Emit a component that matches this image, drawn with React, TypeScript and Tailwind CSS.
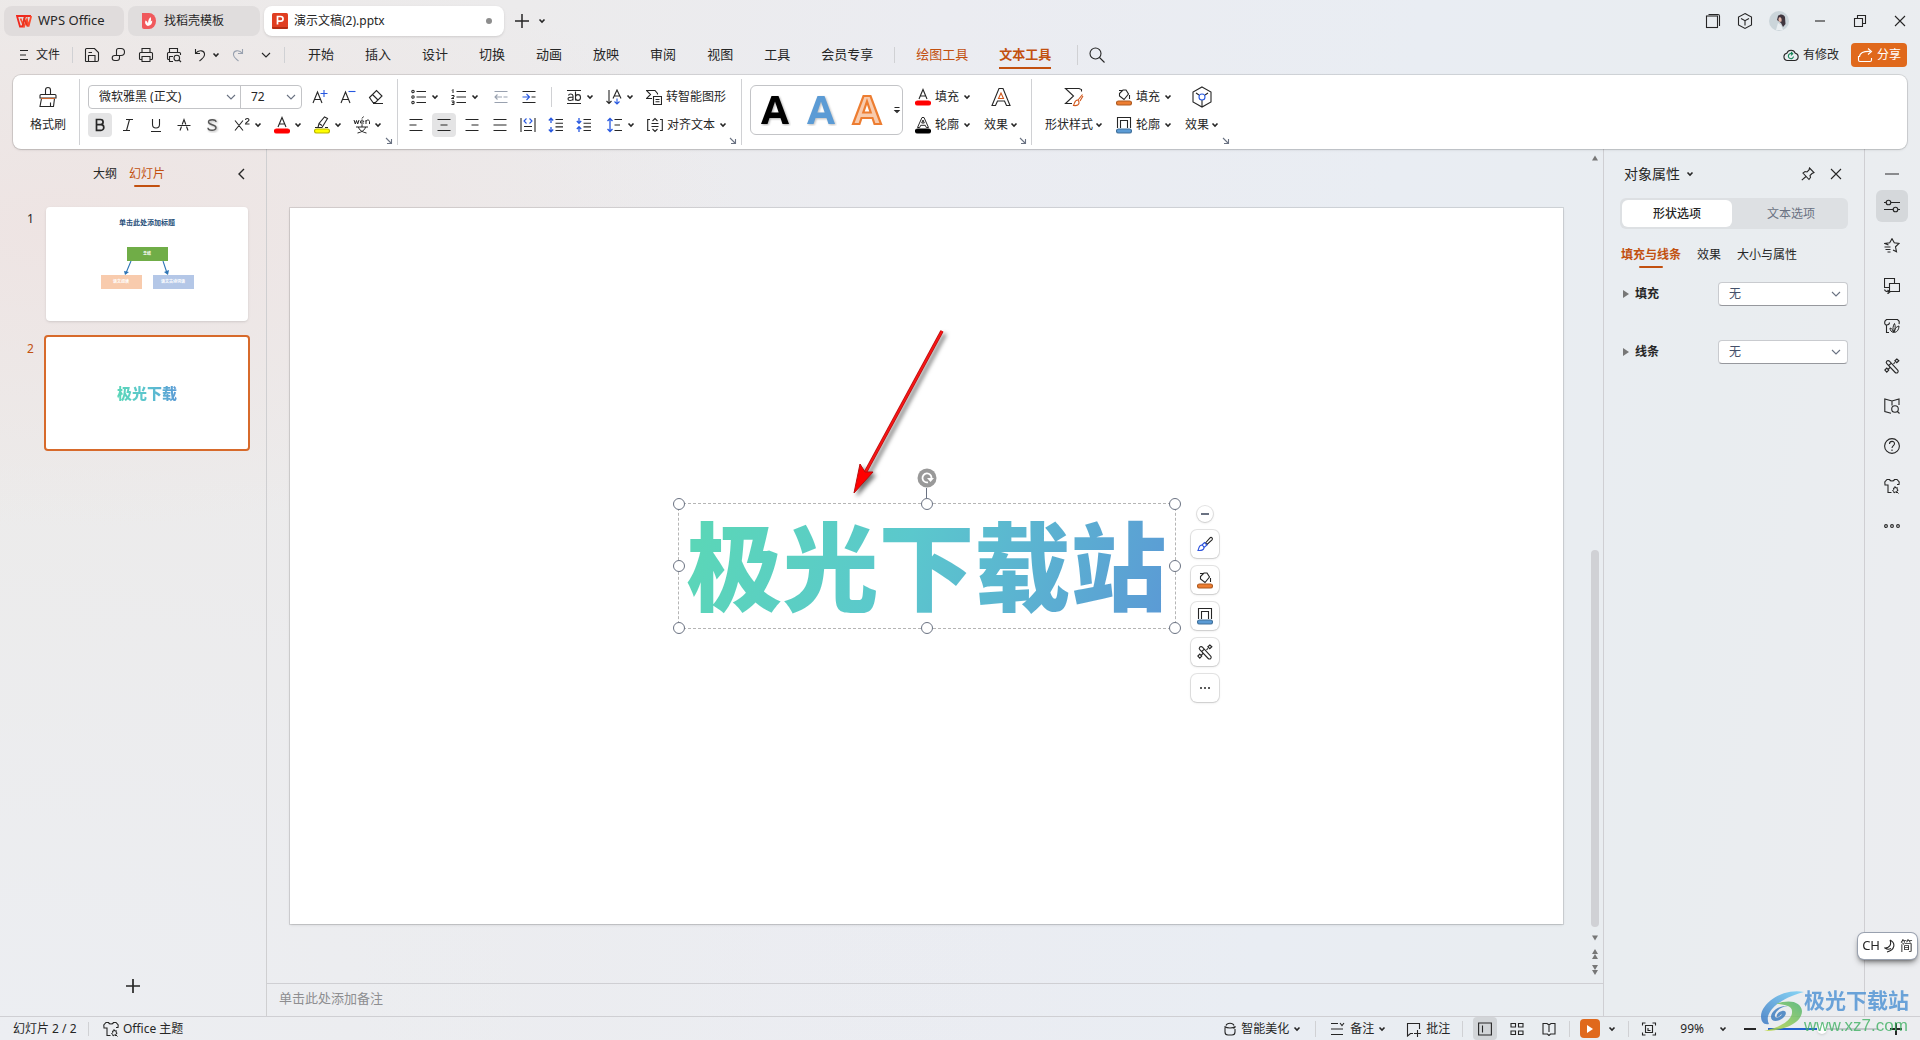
import { FC, ReactNode } from "react";

type IconProps = { w?: number; h?: number; className?: string; children: ReactNode };

const Svg: FC<IconProps> = ({ w = 16, h = 16, className, children }) => (
  <svg
    width={w}
    height={h}
    viewBox={`0 0 ${w} ${h}`}
    fill="none"
    stroke="currentColor"
    strokeWidth="1.1"
    className={`shrink-0 ${className ?? ""}`}
    aria-hidden="true"
  >
    {children}
  </svg>
);

const Caret: FC = () => (
  <Svg w={8} h={8}>
    <path d="M1.500 2.500 4 5l2.500-2.500" strokeWidth="1.600" />
  </Svg>
);

const Chevron: FC<{ className?: string }> = ({ className }) => (
  <Svg w={10} h={10} className={className}>
    <path d="M1 3l4 4 4-4" />
  </Svg>
);

const Launcher: FC = () => (
  <div className="flex justify-end">
    <button aria-label="更多设置" className="text-gray-500">
      <Svg w={8} h={8} className="block">
        <path d="M1 1l5 5M6.500 2v4.500H2" />
      </Svg>
    </button>
  </div>
);

const Divider: FC<{ className?: string }> = ({ className }) => (
  <div className={`w-px shrink-0 bg-[#d0d1d4] ${className ?? ""}`} />
);

const Tool: FC<{ label: string; active?: boolean; dim?: boolean; children: ReactNode }> = ({
  label,
  active,
  dim,
  children,
}) => (
  <div className="flex w-7 justify-center">
    <button
      aria-label={label}
      className={`flex size-6 items-center justify-center rounded ${
        active ? "bg-[#e4e4e5]" : ""
      } ${dim ? "text-gray-400" : ""}`}
    >
      {children}
    </button>
  </div>
);

const Split: FC<{ label: string; children: ReactNode }> = ({ label, children }) => (
  <button aria-label={label} className="flex h-6 items-center">
    <span className="flex w-6 justify-center">{children}</span>
    <Caret />
  </button>
);

const TextTool: FC<{ label: string; icon: ReactNode; caret?: boolean }> = ({
  label,
  icon,
  caret = true,
}) => (
  <button className="flex h-6 items-center">
    <span className="flex w-6 justify-center">{icon}</span>
    <span className="mr-1">{label}</span>
    {caret && <Caret />}
  </button>
);

const BigTool: FC<{ label: string; icon: ReactNode; caret?: boolean }> = ({
  label,
  icon,
  caret = true,
}) => (
  <button className="flex flex-col items-center gap-1">
    <span className="flex h-6 items-center">{icon}</span>
    <span className="flex h-6 items-center gap-0.5">
      {label}
      {caret && <Caret />}
    </span>
  </button>
);

/* ---------- icons ---------- */

const WpsLogo: FC = () => (
  <Svg w={16} h={14}>
    <path d="M1 2h8L6.500 12.500H4L1 2zM15 2H9.500" stroke="#f0291f" strokeWidth="1.800" />
    <path d="M4.500 4.500 8 12.500l3-7 1.500 7L15.200 2" stroke="#fb4a2d" strokeWidth="1.800" />
    <path d="M9 2 6.500 12M8 4l3.500 8.500" stroke="#e6321f" strokeWidth="1.500" />
  </Svg>
);

const DocerLogo: FC = () => (
  <Svg w={15} h={16}>
    <path d="M1 0h7a7 8 0 0 1 0 16H3a2 2 0 0 1-2-2V0z" fill="#f0595c" stroke="none" />
    <path
      d="M7 13C3.500 11.500 4 9 4.500 7.500c1.500.500 2 1.500 2.500 3 0-3 1-5 2.500-6.500 1 2 .500 3.500 0 4.500l1.700-1c.300 3-1.200 5-4.200 5.500z"
      fill="#fff"
      stroke="none"
    />
  </Svg>
);

const PptLogo: FC = () => (
  <Svg w={16} h={16}>
    <rect width="16" height="16" rx="1.500" fill="#e03e21" stroke="none" />
    <path d="M0 14.500a1.500 1.500 0 0 0 1.500 1.500h13a1.500 1.500 0 0 0 1.500-1.500V14H0z" fill="#b52d13" stroke="none" />
    <path d="M5.500 11.500V3.500h3.200a2.300 2.300 0 0 1 0 4.700H5.500" stroke="#fff" strokeWidth="1.700" />
  </Svg>
);

const SaveIcon: FC = () => (
  <Svg>
    <path d="M1.500 14V2.500a1 1 0 0 1 1-1h8l4 4V13a1.500 1.500 0 0 1-1.500 1.500H2a.500.500 0 0 1-.500-.500zM4.500 14.500v-6h6.500v6M4.500 5.500H8" />
  </Svg>
);

const ExportIcon: FC = () => (
  <Svg>
    <path d="M5.500 8V3.500a2 2 0 0 1 2-2H10a3.500 3.500 0 0 1 0 7H3.700a2.500 2.500 0 0 0 0 5H6a2.500 2.500 0 0 0 2.500-2.500V8.500" />
  </Svg>
);

const PrintIcon: FC = () => (
  <Svg>
    <path d="M4 5.500v-4h8v4M3.500 12.500h-1a1 1 0 0 1-1-1v-5a1 1 0 0 1 1-1h11a1 1 0 0 1 1 1v5a1 1 0 0 1-1 1h-1M4 9.500h8v5H4z" />
  </Svg>
);

const PreviewIcon: FC = () => (
  <Svg>
    <path d="M3.500 5.500v-4h8v4M3.500 12.500h-1a1 1 0 0 1-1-1v-5a1 1 0 0 1 1-1h11a1 1 0 0 1 1 1V8M7 9.500H3.500v5H7" />
    <circle cx="10.800" cy="11" r="2.800" />
    <path d="M13 13l2 2" />
  </Svg>
);

const UndoIcon: FC = () => (
  <Svg>
    <path d="M3.500 2v4.500H8M3.500 6.500C7 2 13 3.500 12.500 8c-.300 3-3 4-5 6" />
  </Svg>
);

const RedoIcon: FC = () => (
  <Svg>
    <path d="M12.500 2v4.500H8M12.500 6.500C9 2 3 3.500 3.500 8c.300 3 3 4 5 6" />
  </Svg>
);

const BrushIcon: FC = () => (
  <Svg w={22} h={22}>
    <path d="M8.500 8V4a2.500 2.500 0 0 1 5 0v4M4 8.500h14a1 1 0 0 1 1 1V12H3V9.500a1 1 0 0 1 1-1zM4.500 12.500 3 20.500h13.500l1-8M13.500 16.500v4" />
    <path d="M4 12.500h14" stroke="#d0672f" />
  </Svg>
);

const BulletIcon: FC<{ numbered?: boolean }> = ({ numbered }) => (
  <Svg>
    {numbered ? (
      <path d="M2 .500V4M1 1.500l1-1M.500 6.500H3V8L.500 9.500H3M.500 12H3v3.500H.500M1 13.700h2" strokeWidth="1" />
    ) : (
      <>
        <circle cx="2" cy="2.500" r="1.200" />
        <circle cx="2" cy="8" r="1.200" />
        <circle cx="2" cy="13.500" r="1.200" />
      </>
    )}
    <path d="M5.500 2.500H15M5.500 8H15M5.500 13.500H15" />
  </Svg>
);

const IndentIcon: FC<{ out?: boolean }> = ({ out }) => (
  <Svg>
    <path d="M1.500 2.500h13M1.500 13.500h13M10.500 8h4" />
    <path
      d={out ? "M9 8H2M4.500 5.500 2 8l2.500 2.500" : "M1.500 8h6M5.500 5 8.500 8l-3 3"}
      stroke={out ? "currentColor" : "#2758e0"}
    />
  </Svg>
);

const AlignIcon: FC<{ d: string }> = ({ d }) => (
  <Svg>
    <path d={d} />
  </Svg>
);

const SpacingIcon: FC<{ d: string }> = ({ d }) => (
  <Svg>
    <path d={d} stroke="#2758e0" strokeWidth="1.300" />
    <path d="M7.500 2.500H15M7.500 6.200H15M7.500 9.900H15M7.500 13.500H15" />
  </Svg>
);

const LetterA: FC = () => <path d="M4 11 8 1.500 12 11M5.500 8h5" />;

const FontColorIcon: FC<{ bar: string; hollow?: boolean }> = ({ bar, hollow }) => (
  <Svg w={16} h={18}>
    {hollow ? (
      <path d="M2.500 11.500 7 1.500h2l4.500 10h-2.200l-1-2.200H5.700l-1 2.200zM6.700 7h2.600L8 4z" strokeWidth="1" />
    ) : (
      <LetterA />
    )}
    <rect x=".500" y="13" width="15" height="4" rx="2" fill={bar} stroke={bar} />
  </Svg>
);

const HighlightIcon: FC = () => (
  <Svg w={16} h={18}>
    <path d="M1 11.500h7l5.500-9-3-1.500L5 7.500l-1 4M5 7.500l3 2M11 11.500h3" />
    <rect x=".500" y="13" width="15" height="4" rx="2" fill="#ff0" stroke="#b9b400" />
  </Svg>
);

const BucketIcon: FC = () => (
  <Svg w={16} h={18}>
    <path d="M3.500 5.500 7 2h3l2.500 4-4.500 5.500-4.500-3.500zM3 2.500h4M13.500 7v4" />
    <rect x=".500" y="13" width="15" height="4" rx="2" fill="#ed7d31" stroke="#ae5a21" />
  </Svg>
);

const OutlineIcon: FC = () => (
  <Svg w={16} h={18}>
    <path d="M1.500 12V1.500h13V12M4.500 12V4.500h7V12" />
    <rect x=".500" y="13" width="15" height="4" rx="2" fill="#5b9bd5" stroke="#41719c" />
  </Svg>
);

const SparkIcon: FC = () => (
  <Svg>
    <path
      d="M2.800 3.200a1.800 1.800 0 0 1 2.600 0l8.300 8.900a1.700 1.700 0 0 1-2.500 2.400L2.800 5.700a1.800 1.800 0 0 1 0-2.500zM4.800 7.500l2.500-2.300M9.500 5.800 11 4.300M4.300 11.200l1.700-1.700"
      strokeWidth="1.100"
    />
    <path d="M12.800 1l2 1.800-2 1.900-1.900-1.900zM2.800 10.200l1.900 1.900-1.900 2-1.900-2z" strokeWidth="1.200" />
  </Svg>
);

const ShirtIcon: FC = () => (
  <Svg>
    <path d="M7.500 14.500H4V7H1L.800 4 3 1.500h2.500c.500 2 4.500 2 5 0H13L15.200 4 15 6.500h-2" />
    <path
      d="M11 8.500l.700 1.500 1.700-.300-.500 1.500 1.300 1-1.500.800.300 1.700-1.700-.700L10 15l-.200-1.700-1.300-.700 1.300-1L9.500 10l1 .200zM13 14l1.500 1.500"
      strokeWidth="1"
    />
  </Svg>
);

/* ---------- title bar & menu ---------- */

const TitleBar: FC = () => (
  <header className="flex h-[41px] shrink-0 items-center pl-1 text-[13px]">
    <button className="mr-1 flex h-[30px] w-[120px] items-center gap-1.5 rounded-lg bg-[#e0dcdc] pl-3">
      <WpsLogo />
      WPS Office
    </button>
    <button className="mr-1 flex h-[30px] w-[132px] items-center gap-2 rounded-lg bg-[#e0dddd] pl-[13px] text-xs">
      <DocerLogo />
      找稻壳模板
    </button>
    <button className="flex h-[30px] w-[240px] items-center gap-1.5 rounded-lg bg-white pl-2 text-xs shadow">
      <PptLogo />
      演示文稿(2).pptx
      <span className="mr-3 ml-auto size-1.5 rounded-full bg-[#8d8d8d]" />
    </button>
    <button aria-label="新建" className="ml-2.5">
      <Svg>
        <path d="M8 1v14M1 8h14" strokeWidth="1.500" />
      </Svg>
    </button>
    <button aria-label="标签列表" className="ml-2">
      <Caret />
    </button>

    <div className="ml-auto flex items-center">
      <button aria-label="窗口" className="flex w-8 justify-center">
        <Svg>
          <rect x="1.500" y="3" width="11" height="11.500" />
          <path d="M3.500 1.500H13a1.500 1.500 0 0 1 1.500 1.500v10" />
        </Svg>
      </button>
      <button aria-label="应用" className="mr-2 flex w-8 justify-center">
        <Svg w={16} h={18}>
          <path d="M8 1.500 14.500 5v8L8 16.500 1.500 13V5L8 1.500zM4 6.500l4 2.200 4-2.200M8 8.700v4.800" />
        </Svg>
      </button>
      <button aria-label="账号">
        <Svg w={20} h={20} className="rounded-full">
          <rect width="20" height="20" fill="#cbd5da" stroke="none" />
          <path d="M9 5c2-2.500 6-2 7 1l.500 7-2.500 3-2-4-4-3z" fill="#40363f" stroke="none" />
          <path d="M10 6.500c2-1 3 1 2.500 4l-2 .500c-1-1-1.500-3-.500-4.500z" fill="#e5b9ab" stroke="none" />
          <path d="M7 19l2-7 3 2 2 5z" fill="#e9eef1" stroke="none" />
        </Svg>
      </button>
      <button aria-label="最小化" className="ml-[11px] flex w-10 justify-center">
        <Svg w={12} h={12}>
          <path d="M1 6h10" />
        </Svg>
      </button>
      <button aria-label="还原" className="flex w-10 justify-center">
        <Svg w={14} h={14}>
          <path d="M1.500 4.500h8v8h-8zM4.500 4V1.500h8v8H10" />
        </Svg>
      </button>
      <button aria-label="关闭" className="flex w-10 justify-center">
        <Svg w={12} h={12}>
          <path d="M1 1l10 10M11 1 1 11" />
        </Svg>
      </button>
    </div>
  </header>
);

const menus: string[] = ["开始", "插入", "设计", "切换", "动画", "放映", "审阅", "视图", "工具", "会员专享"];

const MenuBar: FC = () => (
  <nav className="mb-1.5 flex h-7 shrink-0 items-center text-[13px]">
    <button className="ml-[18px] flex items-center gap-1.5 text-xs">
      <Svg w={12} h={12}>
        <path d="M2 1.500h8M2 6h6M2 10.500h8" />
      </Svg>
      文件
    </button>
    <Divider className="mr-[5px] ml-3 h-4" />
    <div className="flex">
      <Tool label="保存">
        <SaveIcon />
      </Tool>
      <div className="-mx-px flex">
        <Tool label="输出">
          <ExportIcon />
        </Tool>
      </div>
      <Tool label="打印">
        <PrintIcon />
      </Tool>
      <Tool label="打印预览">
        <PreviewIcon />
      </Tool>
      <Split label="撤销">
        <UndoIcon />
      </Split>
    </div>
    <div className="ml-1 flex">
      <Tool label="恢复" dim>
        <RedoIcon />
      </Tool>
      <Tool label="自定义">
        <Chevron />
      </Tool>
    </div>
    <Divider className="mr-[23px] ml-1 h-4" />
    <div className="flex gap-[31px]">
      {menus.map((menu) => (
        <button key={menu}>{menu}</button>
      ))}
    </div>
    <Divider className="mx-[21px] h-4" />
    <button className="text-[#c2500f]">绘图工具</button>
    <button className="ml-[31px] flex h-7 items-center border-b-2 border-[#c2500f] pt-0.5 font-bold text-[#c2500f]">
      文本工具
    </button>
    <Divider className="mr-2.5 ml-[26px] h-5" />
    <button aria-label="搜索">
      <Svg w={18} h={18}>
        <circle cx="7.500" cy="7.500" r="5.500" />
        <path d="M11.500 11.500l5 5" />
      </Svg>
    </button>

    <button className="mr-3 ml-auto flex items-center gap-1 text-xs">
      <Svg w={16} h={14}>
        <path d="M4.500 12.500a3.700 3.700 0 0 1-.700-7.300 4.500 4.500 0 0 1 8.500 0 3.700 3.700 0 0 1-.700 7.300z" />
        <path d="M10.500 8.500a2.600 2.600 0 1 1-1.500-2.800M8 4l1.700 1.700L8 7.300" stroke="#168659" />
      </Svg>
      有修改
    </button>
    <button className="mr-[13px] flex h-6 w-14 items-center justify-center gap-1 rounded bg-[#e0691c] text-xs text-white">
      <Svg>
        <path d="M1.500 9v4a1.500 1.500 0 0 0 1.500 1.500h10a1.500 1.500 0 0 0 1.500-1.500v-2M2.500 10c0-4 4-6 11-5.500M11 1.500l3.500 3-3.500 3" />
      </Svg>
      分享
    </button>
  </nav>
);

/* ---------- ribbon ---------- */

const Ribbon: FC = () => (
  <section className="z-10 mx-[13px] flex h-[74px] shrink-0 rounded-lg bg-white text-xs shadow ring-1 ring-black/10">
    <div className="w-[66px] pt-2.5 pl-1 text-center">
      <div className="flex justify-center">
        <BigTool label="格式刷" caret={false} icon={<BrushIcon />} />
      </div>
    </div>
    <Divider className="my-1" />

    <div className="w-[317px] pt-2.5 pr-1 pl-2">
      <div className="flex h-6 items-center">
        <div className="mr-1 flex h-6 rounded border border-[#c3c4c7]">
          <div className="relative flex w-[152px] items-center border-r border-[#c3c4c7]">
            <select aria-label="字体" className="w-full appearance-none pl-2.5 text-xs outline-none">
              <option>微软雅黑 (正文)</option>
            </select>
            <Chevron className="pointer-events-none absolute right-1 text-gray-500" />
          </div>
          <div className="relative flex w-[60px] items-center">
            <select aria-label="字号" className="w-full appearance-none pl-2.5 text-xs outline-none">
              <option>72</option>
            </select>
            <Chevron className="pointer-events-none absolute right-[5px] text-gray-500" />
          </div>
        </div>
        <Tool label="增大字号">
          <Svg>
            <path d="M1 14 5.500 3 10 14M2.500 10.500h6" />
            <path d="M12 1v7M8.500 4.500h7" stroke="#2758e0" />
          </Svg>
        </Tool>
        <Tool label="减小字号">
          <Svg>
            <path d="M1 14 5.500 3 10 14M2.500 10.500h6" />
            <path d="M8.500 2.500h7" stroke="#2758e0" />
          </Svg>
        </Tool>
        <Tool label="清除格式">
          <Svg>
            <path d="M1.500 8.500 8.500 1.500l5.500 5.500-6.500 6.500H5zM4.500 5.500l5.500 5.500M5 14.500h10" />
          </Svg>
        </Tool>
      </div>
      <div className="mt-1 flex h-6 items-center">
        <div className="-ml-0.5 flex">
          <Tool label="加粗" active>
            <Svg>
              <path d="M4.500 2.500h4a2.600 2.600 0 0 1 0 5.200h-4zM4.500 7.700H9a2.800 2.800 0 0 1 0 5.600H4.500z" strokeWidth="1.700" />
            </Svg>
          </Tool>
          <Tool label="倾斜">
            <Svg>
              <path d="M6 2.500h7M3 13.500h7M9.500 2.500l-3 11" />
            </Svg>
          </Tool>
          <Tool label="下划线">
            <Svg>
              <path d="M4.500 2v5.500a3.500 3.500 0 0 0 7 0V2M3 14.500h10" />
            </Svg>
          </Tool>
          <Tool label="删除线">
            <Svg>
              <path d="M4 13.500l1.500-4M12 13.500l-1.500-4M6.200 7.500 8 2.500l1.800 5M1.500 8.500h13" />
            </Svg>
          </Tool>
          <Tool label="阴影">
            <Svg>
              <path
                d="M12 5c0-3-7.500-3-7.500 0 0 3.500 7.500 2 7.500 5.700 0 3.500-8 3.300-8 0"
                stroke="#555"
                strokeWidth="1.400"
                className="drop-shadow-[1px_1px_1px_#aaa]"
              />
            </Svg>
          </Tool>
        </div>
        <div className="ml-1 flex gap-2">
          <Split label="上标">
            <Svg>
              <path d="M1 3.500l8 10M9 3.500l-8 10M11.500 3c0-2 3.500-2 3.500 0 0 1.500-3.500 2-3.500 4H15.500" />
            </Svg>
          </Split>
          <Split label="字体颜色">
            <FontColorIcon bar="#f00" />
          </Split>
          <Split label="突出显示">
            <HighlightIcon />
          </Split>
          <Split label="拼音指南">
            <Svg w={18} h={18}>
              <path
                d="M1 4l1.300 4L3.500 4.500 4.700 8 6 4M7.500 6h3.200c0-2.500-3.200-2.500-3.200 0 0 2 1.800 2.500 3 1.500M9 2.500 10.500.500M13 8V4M13 5.500c.500-2 3.500-2 3.500 0V8M3 11h12M9 9v2M5.500 11c.500 3 3.500 5 8 6M12.500 11c-.500 3-3.500 5-8 6"
                strokeWidth="1"
              />
            </Svg>
          </Split>
        </div>
      </div>
      <Launcher />
    </div>
    <Divider className="my-1" />

    <div className="w-[343px] pt-2.5 pr-1 pl-1">
      <div className="flex h-6 items-center pl-[5px]">
        <div className="mr-2 flex gap-2">
          <Split label="项目符号">
            <BulletIcon />
          </Split>
          <Split label="编号">
            <BulletIcon numbered />
          </Split>
        </div>
        <Tool label="减少缩进" dim>
          <IndentIcon out />
        </Tool>
        <Tool label="增加缩进">
          <IndentIcon />
        </Tool>
        <Divider className="mr-2.5 ml-2 h-5" />
        <div className="flex gap-2">
          <Split label="文字效果">
            <Svg>
              <path d="M1 1.500h14M1 14.500h14M7 11.500V7c0-2.500-4-2.500-4.500-.500M7 8C3 8 2 8.700 2 10c0 2 4 2 5 0M9.500 2.500v9M9.500 8c0-3 5-3.500 5 .500s-5 3.500-5 .500" />
            </Svg>
          </Split>
          <Split label="文字方向">
            <Svg>
              <path d="M3 1v13.500M.500 12 3 14.500 5.500 12M7 9.500 11 1l4 8.500M8.500 7h5" />
              <path d="M11 9.500v5M8.500 12.500l2.500 2.500 2.500-2.500" stroke="#2758e0" />
            </Svg>
          </Split>
          <TextTool
            label="转智能图形"
            caret={false}
            icon={
              <Svg>
                <path d="M11.500 5.500V4.500L9 1.500H.500l4 4-4 4H6M7.500 7.500h8v8h-8zM9.500 10.500h4M9.500 12.800h4" />
              </Svg>
            }
          />
        </div>
      </div>
      <div className="mt-1 flex h-6 items-center">
        <Tool label="左对齐">
          <AlignIcon d="M1.500 2.500h13M1.500 8h7M1.500 13.500h13" />
        </Tool>
        <Tool label="居中" active>
          <AlignIcon d="M1.500 2.500h13M4.500 8h7M1.500 13.500h13" />
        </Tool>
        <Tool label="右对齐">
          <AlignIcon d="M1.500 2.500h13M7.500 8h7M1.500 13.500h13" />
        </Tool>
        <Tool label="两端对齐">
          <AlignIcon d="M1.500 2.500h13M1.500 8h13M1.500 13.500h13" />
        </Tool>
        <Tool label="分散对齐">
          <Svg>
            <path d="M1 1v14M15 1v14M4 9.500h8M4 13.500h8" />
            <path d="M6.500 1.500 4 4l2.500 2.500M9.500 1.500 12 4 9.500 6.500" stroke="#2758e0" />
          </Svg>
        </Tool>
        <Tool label="增大段落间距">
          <SpacingIcon d="M3 1v5M.800 3.500 3 1.200l2.200 2.300M3 10v5M.800 12.500 3 14.800l2.200-2.300" />
        </Tool>
        <Tool label="减小段落间距">
          <SpacingIcon d="M3 1v5M.800 4 3 6.300 5.200 4M3 10v5M.800 12 3 9.700 5.200 12" />
        </Tool>
        <div className="ml-[5px] flex gap-2">
          <Split label="行距">
            <Svg>
              <path d="M3 1.500v13M.500 4 3 1.500 5.500 4M.500 12 3 14.500 5.500 12" stroke="#2758e0" strokeWidth="1.300" />
              <path d="M7.500 2.500H15M7.500 8H13M7.500 13.500H15" />
            </Svg>
          </Split>
          <TextTool
            label="对齐文本"
            icon={
              <Svg>
                <path d="M3 2.500H.700v11H3M13 2.500h2.300v11H13M4.500 6.500h7M4.500 9.500h7M5.500 4 8 1.500 10.500 4M5.500 12 8 14.500l2.500-2.500" />
              </Svg>
            }
          />
        </div>
      </div>
      <Launcher />
    </div>
    <Divider className="my-1" />

    <div className="w-[289px] pt-2.5 pr-1 pl-2">
      <div className="flex h-[52px]">
        <div className="mr-2 flex h-[50px] w-[153px] items-center rounded-md border border-[#c3c4c7]">
          <button aria-label="黑色艺术字" className="flex w-[46px] justify-center pl-0.5">
            <Svg w={32} h={32}>
              <path
                d="M2 30 12.500 2h7L30 30h-6.500l-2-6h-11l-2 6zM12.300 18.500h7.400L16 7.500z"
                fill="#000"
                stroke="none"
                className="drop-shadow-[1px_1px_1px_#aaa]"
              />
            </Svg>
          </button>
          <button aria-label="蓝色艺术字" className="flex w-[46px] justify-center pl-0.5">
            <Svg w={32} h={32}>
              <path
                d="M2 30 12.500 2h7L30 30h-6.500l-2-6h-11l-2 6zM12.300 18.500h7.400L16 7.500z"
                fill="#5b9bd5"
                stroke="none"
                className="drop-shadow-[1px_1px_1px_#bbb]"
              />
            </Svg>
          </button>
          <button aria-label="橙色艺术字" className="mr-1 flex w-[46px] justify-center pl-0.5">
            <Svg w={32} h={32}>
              <path
                d="M2 30 12.500 2h7L30 30h-6.500l-2-6h-11l-2 6zM12.300 18.500h7.400L16 7.500z"
                fill="#f8cbad"
                stroke="#ed7d31"
                strokeWidth="2.200"
              />
            </Svg>
          </button>
          <button aria-label="更多样式">
            <Svg w={8} h={8}>
              <path d="M1.500 1.500h5M2 4.500l2 2 2-2z" />
            </Svg>
          </button>
        </div>
        <div className="mr-[13px] flex flex-col gap-1">
          <TextTool label="填充" icon={<FontColorIcon bar="#f00" />} />
          <TextTool label="轮廓" icon={<FontColorIcon bar="#000" hollow />} />
        </div>
        <BigTool
          label="效果"
          icon={
            <Svg w={20} h={20}>
              <path d="M1 18.500 8 1.500h4l7 17h-3.500l-2-4.500h-7l-2 4.500z" />
              <path d="M7.500 11.500h5L10 6z" stroke="#d0561a" />
            </Svg>
          }
        />
      </div>
      <Launcher />
    </div>
    <Divider className="my-1" />

    <div className="w-[202px] pt-2.5 pr-1 pl-[13px]">
      <div className="flex h-[52px]">
        <BigTool
          label="形状样式"
          icon={
            <Svg w={20} h={20}>
              <path d="M17.500 4.500v-2L15 1.500H1.500l8 7.500-8 7.500H8" />
              <path d="M18.500 7.500 14 13M16 14l3-5M14 13c-3-.500-3 2-4.500 5.500 3.500.500 6-.500 5.500-3.500z" stroke="#d0561a" />
            </Svg>
          }
        />
        <div className="mr-[13px] ml-[9px] flex flex-col gap-1">
          <TextTool label="填充" icon={<BucketIcon />} />
          <TextTool label="轮廓" icon={<OutlineIcon />} />
        </div>
        <BigTool
          label="效果"
          icon={
            <Svg w={20} h={22}>
              <path d="M10 1 19 6v10l-9 5-9-5V6zM4 7l3 2M16 7l-3 2M10 14v7" />
              <circle cx="10" cy="11" r="3" stroke="#2758e0" />
            </Svg>
          }
        />
      </div>
      <Launcher />
    </div>
  </section>
);

/* ---------- slide list ---------- */

const Sidebar: FC = () => (
  <aside className="flex w-[267px] shrink-0 flex-col border-r border-[#cfcfd1] text-xs">
    <div className="flex h-[50px] items-center gap-3 pl-[93px]">
      <button className="py-1">大纲</button>
      <button className="flex flex-col items-center pt-[5px] text-[#c2500f]">
        幻灯片
        <span className="mt-[3px] h-0.5 w-[26px] rounded bg-[#c2500f]" />
      </button>
      <button aria-label="收起" className="mr-5 ml-auto">
        <Svg w={10} h={12}>
          <path d="M8 1 3 6l5 5" strokeWidth="1.400" />
        </Svg>
      </button>
    </div>
    <ol className="flex flex-1 flex-col gap-3.5 pt-2 pr-4">
      <li className="flex">
        <span className="w-[46px] pt-1 pl-[27px]">1</span>
        <button className="mr-0.5 flex aspect-video flex-1 flex-col items-center rounded-sm bg-white pt-2.5 text-center shadow">
          <span className="text-[7px] leading-3 font-bold text-[#1f4e79]">单击此处添加标题</span>
          <span className="mt-[18px] w-[41px] bg-[#70ad47] text-[4px] leading-[14px] font-bold text-white">总结</span>
          <Svg w={46} h={14}>
            <path d="M7 0 2 12M39 0l4 12" stroke="#2e75b6" />
            <path d="M0 10l5 1-4 3zM45 9l-5 2 4 3z" fill="#2e75b6" stroke="none" />
          </Svg>
          <span className="flex gap-[11px] text-[4px] leading-[14px] font-bold text-white">
            <span className="w-[41px] bg-[#f8cbad]">语文阅读</span>
            <span className="w-[41px] bg-[#b4c7e7]">语文古诗词语</span>
          </span>
        </button>
      </li>
      <li className="flex">
        <span className="w-11 pt-1.5 pl-[27px] text-[#c2500f]">2</span>
        <button className="flex aspect-video flex-1 items-center justify-center rounded border-2 border-[#d76a2b] bg-white">
          <span className="bg-linear-to-r from-[#5bd6b8] via-[#5bc4cf] to-[#5b9bd5] bg-clip-text text-[15px] font-black text-transparent">
            极光下载
          </span>
        </button>
      </li>
    </ol>
    <button aria-label="新建幻灯片" className="mx-auto mb-[22px]">
      <Svg>
        <path d="M8 1v14M1 8h14" strokeWidth="1.700" />
      </Svg>
    </button>
  </aside>
);

/* ---------- canvas ---------- */

const handles: string[] = [
  "-left-1.5 -top-1.5",
  "left-1/2 -ml-1.5 -top-1.5",
  "-right-1.5 -top-1.5",
  "-left-1.5 top-1/2 -mt-1.5",
  "-right-1.5 top-1/2 -mt-1.5",
  "-left-1.5 -bottom-1.5",
  "left-1/2 -ml-1.5 -bottom-1.5",
  "-right-1.5 -bottom-1.5",
];

const floatTools: Array<{ label: string; icon: ReactNode }> = [
  {
    label: "画笔",
    icon: (
      <Svg>
        <path d="M8.500 7 13 1.800a1.400 1.400 0 0 1 2 2L10 8.500z" />
        <path d="M1 14.500c1-2 .500-5 3.500-5.500 1.500.500 2.500 1.500 2.500 3-.500 2-3.500 2.700-6 2.500zM5 9l2.500-2.500 2.500 2.500L7 11.500" stroke="#2f55dd" />
      </Svg>
    ),
  },
  { label: "填充", icon: <BucketIcon /> },
  { label: "轮廓", icon: <OutlineIcon /> },
  { label: "美化", icon: <SparkIcon /> },
  {
    label: "更多",
    icon: (
      <Svg>
        <path d="M3 8h2M7 8h2M11 8h2" strokeWidth="1.600" />
      </Svg>
    ),
  },
];

const Slide: FC = () => (
  <div className="relative mr-7 ml-[23px] flex aspect-video flex-1 items-center justify-center bg-white shadow ring-1 ring-black/10">
    <div className="relative border border-dashed border-[#b5b5b5] px-2 pb-2">
      <h1 className="bg-[linear-gradient(110deg,#5bd6b8_5%,#5bc8cd_45%,#5b9bd5_98%)] bg-clip-text font-['Noto_Sans_CJK_SC',sans-serif] text-[96px] leading-[116px] font-black whitespace-nowrap text-transparent">
        极光下载站
      </h1>
      {handles.map((pos) => (
        <span key={pos} className={`absolute size-3 rounded-full border border-gray-500 bg-white ${pos}`} />
      ))}
      <div className="absolute -top-9 left-1/2 -ml-2.5 flex flex-col items-center">
        <Svg w={20} h={20}>
          <circle cx="10" cy="10" r="9.500" fill="#999" stroke="none" />
          <path d="M11 14.300a4.500 4.500 0 1 1 3.500-4.300" stroke="#fff" strokeWidth="1.800" />
          <path d="M10 10h7l-3.500 4z" fill="#fff" stroke="none" />
        </Svg>
        <span className="h-2.5 w-px bg-gray-500" />
      </div>
      <div className="absolute top-0.5 left-full ml-4 flex flex-col items-center gap-2">
        <button aria-label="收起工具" className="flex size-4 items-center justify-center rounded-full bg-white shadow ring-1 ring-black/10">
          <span className="h-0.5 w-2 bg-gray-500" />
        </button>
        {floatTools.map((tool) => (
          <button
            key={tool.label}
            aria-label={tool.label}
            className="flex size-7 items-center justify-center rounded-md bg-white shadow ring-1 ring-black/10"
          >
            {tool.icon}
          </button>
        ))}
      </div>
    </div>
    <svg
      width="110"
      height="180"
      viewBox="0 0 110 180"
      className="absolute top-[17%] left-[44%] drop-shadow-[3px_3px_2px_rgba(0,0,0,0.55)]"
      aria-hidden="true"
    >
      <path d="M92 1 15 143" stroke="#b80d0d" strokeWidth="3.500" />
      <path d="M92 1 15 143" stroke="#f51515" strokeWidth="2" />
      <path d="M4 163 10 134l5 8 8 0z" fill="#f00" stroke="#b80d0d" />
    </svg>
  </div>
);

const Tri: FC<{ d: string; h?: number }> = ({ d, h = 6 }) => (
  <Svg w={8} h={h}>
    <path d={d} fill="#777" stroke="none" />
  </Svg>
);

const Editor: FC = () => (
  <main className="flex min-w-0 flex-1 flex-col">
    <div className="flex flex-1">
      <div className="flex flex-1 items-center">
        <Slide />
      </div>
      <div className="mr-1 flex w-2 flex-col items-center pt-1.5 pb-2">
        <Tri d="M1 5.500h6L4 .500z" />
        <div className="mt-auto mb-2 h-[46%] w-2 rounded-full bg-[#d0d1d5]" />
        <Tri d="M1 .500h6l-3 5z" />
        <div className="mt-2 mb-1.5">
          <Tri h={10} d="M1 5h6L4 0zM1 10h6L4 5z" />
        </div>
        <Tri h={10} d="M1 0h6L4 5zM1 5h6l-3 5z" />
      </div>
    </div>
    <div className="flex h-[33px] shrink-0 items-center border-t border-[#cfcfd3] pb-0.5 pl-3">
      <input
        aria-label="备注"
        placeholder="单击此处添加备注"
        className="w-full text-[13px] outline-none placeholder:text-[#8e8e90]"
      />
    </div>
  </main>
);

/* ---------- properties ---------- */

const PropertyRow: FC<{ label: string; id: string }> = ({ label, id }) => (
  <div className="flex h-6 items-center">
    <Svg w={8} h={8} className="mr-[5px] ml-0.5">
      <path d="M1 0v8l6-4z" fill="#777" stroke="none" />
    </Svg>
    <label htmlFor={id} className="font-bold">
      {label}
    </label>
    <div className="relative ml-auto flex w-[130px] items-center">
      <select
        id={id}
        className="h-6 w-full appearance-none rounded border border-[#c9cbcf] border-b-[#96989d] bg-white pl-2.5 text-[#44506a] outline-none"
      >
        <option>无</option>
      </select>
      <Chevron className="pointer-events-none absolute right-[7px] text-gray-500" />
    </div>
  </div>
);

const Properties: FC = () => (
  <aside className="w-[261px] shrink-0 border-l border-[#cfcfd3] px-4 text-xs">
    <div className="flex h-[49px] items-center pl-1">
      <button className="flex items-center gap-1.5 text-sm">
        对象属性
        <Caret />
      </button>
      <button aria-label="固定" className="mr-[15px] ml-auto">
        <Svg w={14} h={14}>
          <path d="M8.500 1 13 5.500l-2 1-2 2 .500 2-1.500 2L2 6l2-1.500 2 .500 2-2zM5 9.500.800 13.200" />
        </Svg>
      </button>
      <button aria-label="关闭面板" className="mr-1.5">
        <Svg w={12} h={12}>
          <path d="M1 1l10 10M11 1 1 11" />
        </Svg>
      </button>
    </div>
    <div className="flex h-[31px] rounded-md bg-[#dde0e3] p-0.5">
      <button className="w-[110px] rounded-md bg-white font-medium">形状选项</button>
      <button className="flex-1 pl-1 text-gray-500">文本选项</button>
    </div>
    <div className="mt-[18px] mb-[11px] flex h-6 items-start gap-4 pl-px">
      <button className="flex flex-col items-center font-bold text-[#c2500f]">
        填充与线条
        <span className="mt-[3px] h-0.5 w-6 rounded bg-[#c2500f]" />
      </button>
      <button>效果</button>
      <button>大小与属性</button>
    </div>
    <div className="flex flex-col gap-[34px]">
      <PropertyRow id="fill" label="填充" />
      <PropertyRow id="line" label="线条" />
    </div>
  </aside>
);

const railIcons: Array<{ label: string; icon: ReactNode }> = [
  {
    label: "属性",
    icon: (
      <Svg>
        <circle cx="4.500" cy="4.500" r="2.300" />
        <circle cx="11.500" cy="11.500" r="2.300" />
        <path d="M0 4.500h2.200M6.800 4.500H16M0 11.500h9.200M13.800 11.500H16" />
      </Svg>
    ),
  },
  {
    label: "动画",
    icon: (
      <Svg>
        <path d="M4.500 7 1 5.500l4.700-.700L8 .700l2.300 4.100 4.700.700-3.500 3.300 1 5L9 12M.500 9h6M1.500 11.500h5M3.500 14h3" />
      </Svg>
    ),
  },
  {
    label: "切换",
    icon: (
      <Svg>
        <path d="M5.500 9.500h-5v-9h10V5M5.500 5.500h10v8h-10zM.500 11.500c.500 2 2 2.500 5 2.500M3.500 12l2.300 2-2.300 2" />
      </Svg>
    ),
  },
  {
    label: "模板",
    icon: (
      <Svg>
        <path d="M5 14.500H2.500V7C.500 7 .500 4.500 1 3l1.500-1.500h11L15 3c.300 1 .300 2 0 3M2.500 7c2 0 3-1 3-2.500" />
        <path
          d="M9.500 14.500C7.500 14 6 12.500 6 10c2 .500 3 2 3.500 4.500zM9.500 14c-1-3-.500-6.500 1-8.500 1 2 1 5.500-.500 8.500zM10.500 14.500c0-3 1-5.500 4.500-6.500 0 3-1.500 6-4.500 6.500z"
          strokeWidth="1"
        />
      </Svg>
    ),
  },
  { label: "美化", icon: <SparkIcon /> },
  {
    label: "查找",
    icon: (
      <Svg>
        <path d="M7 15.300.800 13.500V1L8 3l7-2v6M8 3v4.500" />
        <circle cx="11" cy="11" r="3.300" />
        <path d="M13.300 13.300l2.200 2.200" />
      </Svg>
    ),
  },
  {
    label: "帮助",
    icon: (
      <Svg>
        <circle cx="8" cy="8" r="7.400" />
        <path d="M5.500 6c0-3.500 5-3.500 5-.300C10.500 7.500 8 7.700 8 10M8 11.500V13" />
      </Svg>
    ),
  },
  { label: "主题", icon: <ShirtIcon /> },
  {
    label: "更多",
    icon: (
      <Svg>
        <circle cx="2" cy="8" r="1.400" />
        <circle cx="8" cy="8" r="1.400" />
        <circle cx="14" cy="8" r="1.400" />
      </Svg>
    ),
  },
];

const Rail: FC = () => (
  <aside className="flex w-14 shrink-0 flex-col items-center gap-2 border-l border-[#cfcfd3] pr-px">
    <button aria-label="折叠" className="flex h-[33px] w-8 items-center justify-center pt-4">
      <span className="h-0.5 w-3.5 bg-[#8a8b8e]" />
    </button>
    {railIcons.map((item, i) => (
      <button
        key={item.label}
        aria-label={item.label}
        className={`flex size-8 items-center justify-center rounded-md ${i === 0 ? "bg-[#d5d8db]" : ""}`}
      >
        {item.icon}
      </button>
    ))}
  </aside>
);

/* ---------- status bar ---------- */

const StatusBar: FC = () => (
  <footer className="flex h-6 shrink-0 items-center border-t border-[#cfcfd3] text-xs">
    <span className="w-20 pl-[13px] whitespace-nowrap">幻灯片 2 / 2</span>
    <Divider className="mr-3.5 ml-2 h-3.5" />
    <button className="flex items-center gap-1">
      <ShirtIcon />
      Office 主题
    </button>

    <div className="ml-auto flex items-center">
      <button className="flex items-center gap-1">
        <Svg w={14} h={14}>
          <path d="M3 3.500C4 .500 10 .500 11 3.500M1.500 4.500c3 2 8 2 11 0L10.500 6.500M2 5.500V10a3 3 0 0 0 3 3h4a3 3 0 0 0 3-3V7" />
        </Svg>
        智能美化
        <Caret />
      </button>
      <Divider className="mx-3.5 h-4" />
      <button className="flex items-center gap-1">
        <Svg w={16} h={14}>
          <path d="M1 1.500h7M1 7h12M1 12.500h12M10 1l2 2.500L14 1" />
        </Svg>
        备注
        <Caret />
      </button>
      <button className="ml-5 flex items-center gap-1">
        <Svg>
          <path d="M7 12.500H4.500L1.500 15V2.500h12V8M8 12.500h7M11.500 9v7" />
        </Svg>
        批注
      </button>
      <Divider className="mr-2.5 ml-3 h-4" />
      <button aria-label="普通视图" className="flex h-[23px] w-6 items-center justify-center rounded bg-[#d2d5d8]">
        <Svg w={14} h={14}>
          <path d="M.600 1h12.800v12H.600zM4.500 3.500v7" />
        </Svg>
      </button>
      <button aria-label="浏览视图" className="ml-1 flex w-8 justify-center">
        <Svg w={14} h={14}>
          <path d="M1 1.500h4.500V5H1zM8.500 1.500H13V5H8.500zM1 9h4.500v3.500H1zM8.500 9H13v3.500H8.500z" />
        </Svg>
      </button>
      <button aria-label="阅读视图" className="flex w-8 justify-center">
        <Svg w={14} h={14}>
          <path d="M7 13.500 5.500 12H1V1.500h4L7 3l2-1.500h4V12H8.500zM7 3v7" />
        </Svg>
      </button>
      <Divider className="mr-2.5 ml-1 h-4" />
      <button aria-label="放映" className="flex h-[19px] w-5 items-center justify-center rounded bg-[#e0691c]">
        <Svg w={8} h={10}>
          <path d="M1 1v8l6-4z" fill="#fff" stroke="none" />
        </Svg>
      </button>
      <button aria-label="放映选项" className="ml-2">
        <Caret />
      </button>
      <Divider className="mr-3 ml-3 h-4" />
      <button aria-label="适应窗口">
        <Svg>
          <path d="M1.500 4.500V2h3M11.500 2h3v2.500M14.500 11.500V14h-3M4.500 14h-3v-2.500M4.500 4.500h7v7h-7zM7 7v2.500h2.500" />
        </Svg>
      </button>
      <button className="ml-[23px] flex items-center gap-[15px]">
        99%
        <Caret />
      </button>
      <button aria-label="缩小" className="mr-3 ml-[17px]">
        <Svg w={12} h={12}>
          <path d="M0 6h12" strokeWidth="2" />
        </Svg>
      </button>
      <input
        type="range"
        aria-label="缩放"
        defaultValue={49}
        className="h-0.5 w-[110px] appearance-none bg-linear-to-r from-[#2463cf] from-50% to-[#c3c6cb] to-50% [&::-webkit-slider-thumb]:size-2.5 [&::-webkit-slider-thumb]:appearance-none [&::-webkit-slider-thumb]:rounded-full [&::-webkit-slider-thumb]:bg-white [&::-webkit-slider-thumb]:shadow"
      />
      <button aria-label="放大" className="mr-[18px] ml-3">
        <Svg w={12} h={12}>
          <path d="M0 6h12M6 0v12" strokeWidth="2" />
        </Svg>
      </button>
    </div>
  </footer>
);

/* ---------- overlays ---------- */

const ImeBadge: FC = () => (
  <div className="fixed right-[3px] bottom-[81px] z-20 flex h-[26px] items-center gap-1 rounded-md bg-white px-1 text-[13px] whitespace-nowrap shadow-md ring-1 shadow-black/50 ring-gray-400">
    CH
    <Svg w={12} h={14}>
      <path d="M6 1c6 3 5 10-3 12M6 1c2 5-1 8-5 8 2 1.500 4 1.500 6 .500" />
    </Svg>
    简
  </div>
);

const Watermark: FC = () => (
  <div className="pointer-events-none fixed right-[11px] bottom-1.5 z-20 flex items-center opacity-80">
    <svg width="44" height="42" viewBox="0 0 44 42" aria-hidden="true">
      <defs>
        <linearGradient id="sky" x1="0" y1="1" x2="1" y2="0">
          <stop offset="0" stopColor="#2f6fc0" />
          <stop offset="1" stopColor="#6fd0f8" />
        </linearGradient>
        <linearGradient id="leaf" x1="0" y1="1" x2="1" y2="0">
          <stop offset="0" stopColor="#c3da3c" />
          <stop offset="1" stopColor="#3fae6a" />
        </linearGradient>
      </defs>
      <path d="M44 2C24-2 2 12 1 26c0 6 3 9 8 8C4 25 14 10 44 2z" fill="url(#sky)" />
      <path d="M16 14c14-5 25-2 26 7 0 12-18 20-38 20 17-4 29-11 28-20 0-5-8-7-16-7z" fill="url(#leaf)" />
      <path d="M28 16c-9-1-17 5-17 11 0 5 7 5 12 1 4-3 4-8-1-7-4 1-6 4-5 6 2 0 3-2 5-3-1 3-5 4-7 3-1-4 4-10 13-11z" fill="#3577bd" />
    </svg>
    <div className="flex flex-col gap-1.5">
      <span className="text-[21px] leading-6 font-bold text-[#4a8fd3]">极光下载站</span>
      <span className="font-['Liberation_Sans',sans-serif] text-[17px] leading-4 font-medium text-[#3fb062]">
        www.xz7.com
      </span>
    </div>
  </div>
);

const App: FC = () => (
  <div className="flex h-screen flex-col overflow-hidden bg-[radial-gradient(ellipse_at_3%_22%,#eee4e3_0%,transparent_26%),radial-gradient(ellipse_at_0%_100%,#eceef2_0%,transparent_40%),linear-gradient(100deg,#ecebea_0%,#ecebec_25%,#ebecf1_45%,#e9edf3_68%,#e9edf0_85%,#ecedf0_100%)] font-['Noto_Sans','Noto_Sans_CJK_SC',sans-serif] text-[#262626]">
    <TitleBar />
    <MenuBar />
    <Ribbon />
    <div className="flex min-h-0 flex-1">
      <Sidebar />
      <Editor />
      <Properties />
      <Rail />
    </div>
    <StatusBar />
    <ImeBadge />
    <Watermark />
  </div>
);

export default App;
